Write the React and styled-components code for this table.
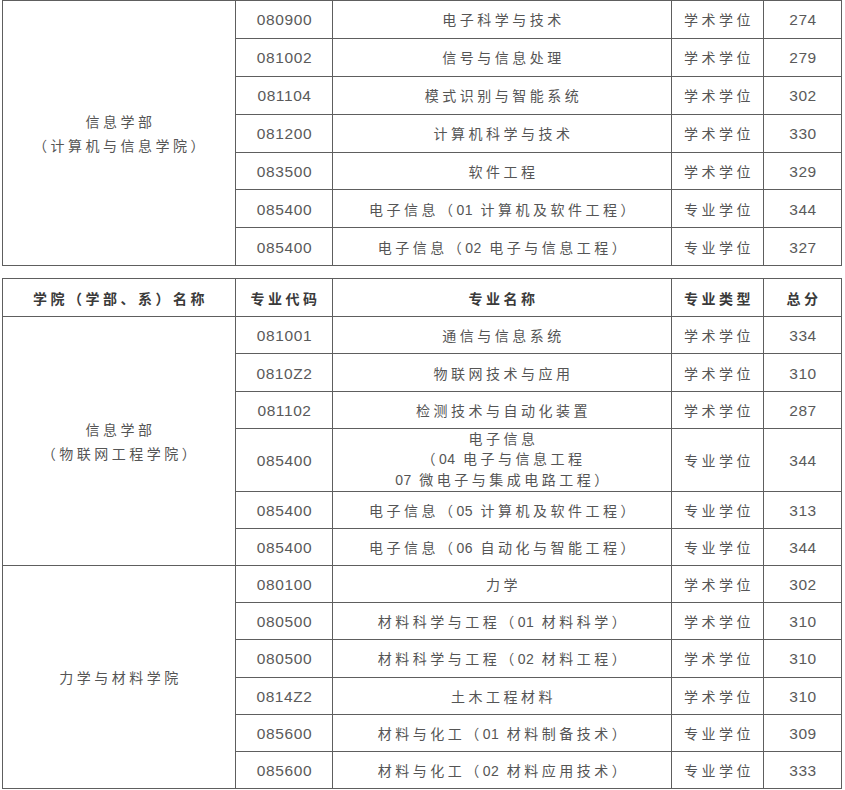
import React from 'react';
import styled, { createGlobalStyle } from 'styled-components';

const GlobalStyle = createGlobalStyle`
  html, body {
    margin: 0;
    padding: 0;
    background: #ffffff;
  }
  body {
    font-family: "Liberation Sans", "Noto Sans CJK SC", sans-serif;
    color: #555555;
  }
`;

const firstPart = [
  {
    college: ['信息学部', '（计算机与信息学院）'],
    rows: [
      ['080900', ['电子科学与技术'], '学术学位', '274'],
      ['081002', ['信号与信息处理'], '学术学位', '279'],
      ['081104', ['模式识别与智能系统'], '学术学位', '302'],
      ['081200', ['计算机科学与技术'], '学术学位', '330'],
      ['083500', ['软件工程'], '学术学位', '329'],
      ['085400', ['电子信息（01 计算机及软件工程）'], '专业学位', '344'],
      ['085400', ['电子信息（02 电子与信息工程）'], '专业学位', '327'],
    ],
  },
];

const secondPart = [
  {
    college: ['信息学部', '（物联网工程学院）'],
    rows: [
      ['081001', ['通信与信息系统'], '学术学位', '334'],
      ['0810Z2', ['物联网技术与应用'], '学术学位', '310'],
      ['081102', ['检测技术与自动化装置'], '学术学位', '287'],
      ['085400', ['电子信息', '（04 电子与信息工程', '07 微电子与集成电路工程）'], '专业学位', '344'],
      ['085400', ['电子信息（05 计算机及软件工程）'], '专业学位', '313'],
      ['085400', ['电子信息（06 自动化与智能工程）'], '专业学位', '344'],
    ],
  },
  {
    college: ['力学与材料学院'],
    rows: [
      ['080100', ['力学'], '学术学位', '302'],
      ['080500', ['材料科学与工程（01 材料科学）'], '学术学位', '310'],
      ['080500', ['材料科学与工程（02 材料工程）'], '学术学位', '310'],
      ['0814Z2', ['土木工程材料'], '学术学位', '310'],
      ['085600', ['材料与化工（01 材料制备技术）'], '专业学位', '309'],
      ['085600', ['材料与化工（02 材料应用技术）'], '专业学位', '333'],
    ],
  },
];

const headers = ['学院（学部、系）名称', '专业代码', '专业名称', '专业类型', '总分'];

// digits inside chinese text are set tighter than the ideographs
const withDigits = (text) =>
  text.split(/(\d+)/).map((part, i) =>
    /^\d+$/.test(part) ? <Digits key={i}>{part}</Digits> : part
  );

const App = () => {
  const renderGroups = (groups, rowHeight) =>
    groups.map((group, g) =>
      group.rows.map((row, i) => {
        const multi = row[1].length > 1;
        return (
          <Row key={`${g}-${i}`} $h={multi ? 62 : rowHeight}>
            {i === 0 && (
              <CollegeCell rowSpan={group.rows.length}>
                {group.college.map((line, k) => (
                  <CollegeLine key={k}>{line}</CollegeLine>
                ))}
              </CollegeCell>
            )}
            <NumCell>{row[0]}</NumCell>
            <TextCell>
              {row[1].map((line, k) => (
                <NameLine key={k} $multi={multi}>
                  {withDigits(line)}
                </NameLine>
              ))}
            </TextCell>
            <TextCell>{row[2]}</TextCell>
            <NumCell>{row[3]}</NumCell>
          </Row>
        );
      })
    );

  return (
    <>
      <GlobalStyle />
      <Page>
        <Table>
          <ColGroup />
          <tbody>{renderGroups(firstPart, 37.9)}</tbody>
        </Table>
        <Table>
          <ColGroup />
          <thead>
            <Row $h={38}>
              {headers.map((h) => (
                <HeadCell key={h}>{h}</HeadCell>
              ))}
            </Row>
          </thead>
          <tbody>{renderGroups(secondPart, 37.2)}</tbody>
        </Table>
      </Page>
    </>
  );
};

const ColGroup = () => (
  <colgroup>
    <col style={{ width: 233 }} />
    <col style={{ width: 97 }} />
    <col style={{ width: 339 }} />
    <col style={{ width: 92 }} />
    <col style={{ width: 78 }} />
  </colgroup>
);

const Page = styled.div`
  display: flex;
  flex-direction: column;
  gap: 12px;
  padding: 0 0 0 2px;
  width: 839px;
`;

const Table = styled.table`
  width: 839px;
  table-layout: fixed;
  border-collapse: collapse;
  border: 1.5px solid #5e5e5e;
`;

const Row = styled.tr`
  height: ${({ $h }) => $h}px;
`;

const cellBase = `
  border: 1px solid #5e5e5e;
  padding: 0 0 0 3px;
  text-align: center;
  vertical-align: middle;
`;

const HeadCell = styled.th`
  ${cellBase}
  font-family: "Noto Sans CJK SC", sans-serif;
  font-size: 14px;
  font-weight: 700;
  letter-spacing: 3.5px;
  color: #3a3a3a;
`;

const CollegeCell = styled.td`
  ${cellBase}
  font-family: "Noto Sans CJK SC", sans-serif;
  font-size: 14px;
  letter-spacing: 3.5px;
  color: #555555;
`;

const CollegeLine = styled.div`
  line-height: 24px;
`;

const NumCell = styled.td`
  ${cellBase}
  padding: 2px 0 0 1px;
  font-family: "Liberation Sans", sans-serif;
  font-size: 15.5px;
  letter-spacing: 0.6px;
  color: #5a5a5a;
`;

const TextCell = styled.td`
  ${cellBase}
  font-size: 14px;
  letter-spacing: 3.5px;
  color: #555555;
`;

const NameLine = styled.div`
  line-height: ${({ $multi }) => ($multi ? '20.6px' : 'normal')};
`;

const Digits = styled.span`
  font-family: "Liberation Sans", sans-serif;
  font-size: 14px;
  letter-spacing: 0.5px;
  line-height: 1;
`;

export default App;
